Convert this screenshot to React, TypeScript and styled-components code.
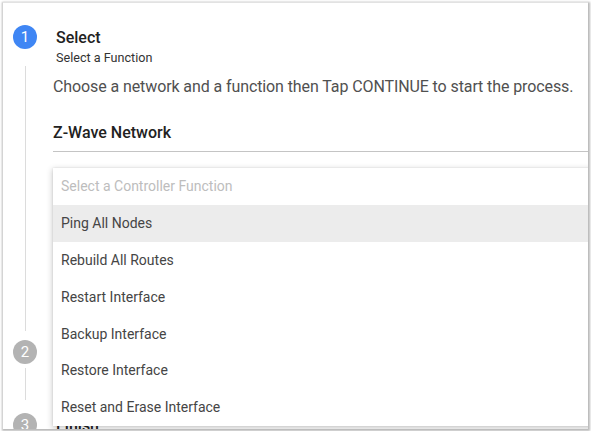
import React from "react";
import styled, { createGlobalStyle } from "styled-components";

const Global = createGlobalStyle`
  html, body { margin: 0; padding: 0; background: #fff; }
  body { font-family: Roboto, "Liberation Sans", Arial, sans-serif; }
  * { box-sizing: border-box; }
`;

const Page = styled.div`
  width: 591px;
  height: 431px;
  padding: 2px 3px 2px 2px;
  background: #fff;
`;

const Card = styled.div`
  position: relative;
  width: 586px;
  height: 427px;
  overflow: hidden;
  background: #fff;
  border-left: 1px solid #d4d4d4;
  border-top: 1px solid #e2e2e2;
  box-shadow: 1px 1px 2px 1px rgba(0, 0, 0, 0.28);
  padding: 22px 0 0 10px;
`;

const StepHeader = styled.div`
  display: flex;
  align-items: flex-start;
  gap: 19px;
`;

const Circle = styled.div<{ $active?: boolean }>`
  width: 24px;
  height: 24px;
  flex: none;
  border-radius: 50%;
  background: ${(p) => (p.$active ? "#3f86f4" : "#b3b3b3")};
  color: #fff;
  font-size: 15px;
  display: flex;
  align-items: center;
  justify-content: center;
`;

const Titles = styled.div`
  display: flex;
  flex-direction: column;
  padding-top: 4px;
`;

const Title = styled.div`
  font-size: 16px;
  font-weight: 500;
  color: #222;
  line-height: 18px;
`;

const Subtitle = styled.div`
  font-size: 12.6px;
  color: #333;
  line-height: 16px;
  margin-top: 3px;
`;

const Content = styled.div<{ $h: number }>`
  margin-left: 12px;
  height: ${(p) => p.$h}px;
  border-left: 1px solid #dcdcdc;
  padding-left: 27px;
  padding-top: 11px;
`;

const Description = styled.div`
  font-size: 16px;
  letter-spacing: -0.1px;
  color: #505050;
  line-height: 20px;
`;

const Label = styled.div`
  margin-top: 26px;
  font-size: 16px;
  font-weight: 500;
  color: #222;
  line-height: 20px;
`;

const Underline = styled.div`
  margin-top: 8px;
  height: 1px;
  background: #c4c4c4;
`;

const Gap = styled.div<{ $h: number }>`
  height: ${(p) => p.$h}px;
`;

const Connector = styled.div<{ $h: number }>`
  margin-left: 12px;
  margin-top: 4px;
  height: ${(p) => p.$h}px;
  border-left: 1px solid #dcdcdc;
`;

const Menu = styled.ul`
  position: absolute;
  left: 50px;
  top: 165px;
  width: 560px;
  margin: 0;
  padding: 0;
  list-style: none;
  background: #fff;
  box-shadow: 0 2px 6px 1px rgba(0, 0, 0, 0.18), 0 0 2px rgba(0, 0, 0, 0.1);
`;

const Item = styled.li<{ $placeholder?: boolean; $hover?: boolean }>`
  height: 36.8px;
  display: flex;
  align-items: center;
  padding-left: 8px;
  font-size: 14px;
  color: ${(p) => (p.$placeholder ? "#bdbdbd" : "#454545")};
  background: ${(p) => (p.$hover ? "#ececec" : "transparent")};
`;

const items = [
  "Ping All Nodes",
  "Rebuild All Routes",
  "Restart Interface",
  "Backup Interface",
  "Restore Interface",
  "Reset and Erase Interface",
];

export default function App() {
  return (
    <Page>
      <Global />
      <Card>
        <StepHeader>
          <Circle $active>1</Circle>
          <Titles>
            <Title>Select</Title>
            <Subtitle>Select a Function</Subtitle>
          </Titles>
        </StepHeader>
        <Content $h={265}>
          <Description>
            Choose a network and a function then Tap CONTINUE to start the process.
          </Description>
          <Label>Z-Wave Network</Label>
          <Underline />
        </Content>
        <Gap $h={9} />
        <StepHeader>
          <Circle>2</Circle>
          <Titles>
            <Title>Execute</Title>
          </Titles>
        </StepHeader>
        <Connector $h={32} />
        <Gap $h={13} />
        <StepHeader>
          <Circle>3</Circle>
          <Titles>
            <Title>Finish</Title>
          </Titles>
        </StepHeader>
        <Menu>
          <Item $placeholder>Select a Controller Function</Item>
          {items.map((t, i) => (
            <Item key={t} $hover={i === 0}>
              {t}
            </Item>
          ))}
        </Menu>
      </Card>
    </Page>
  );
}
